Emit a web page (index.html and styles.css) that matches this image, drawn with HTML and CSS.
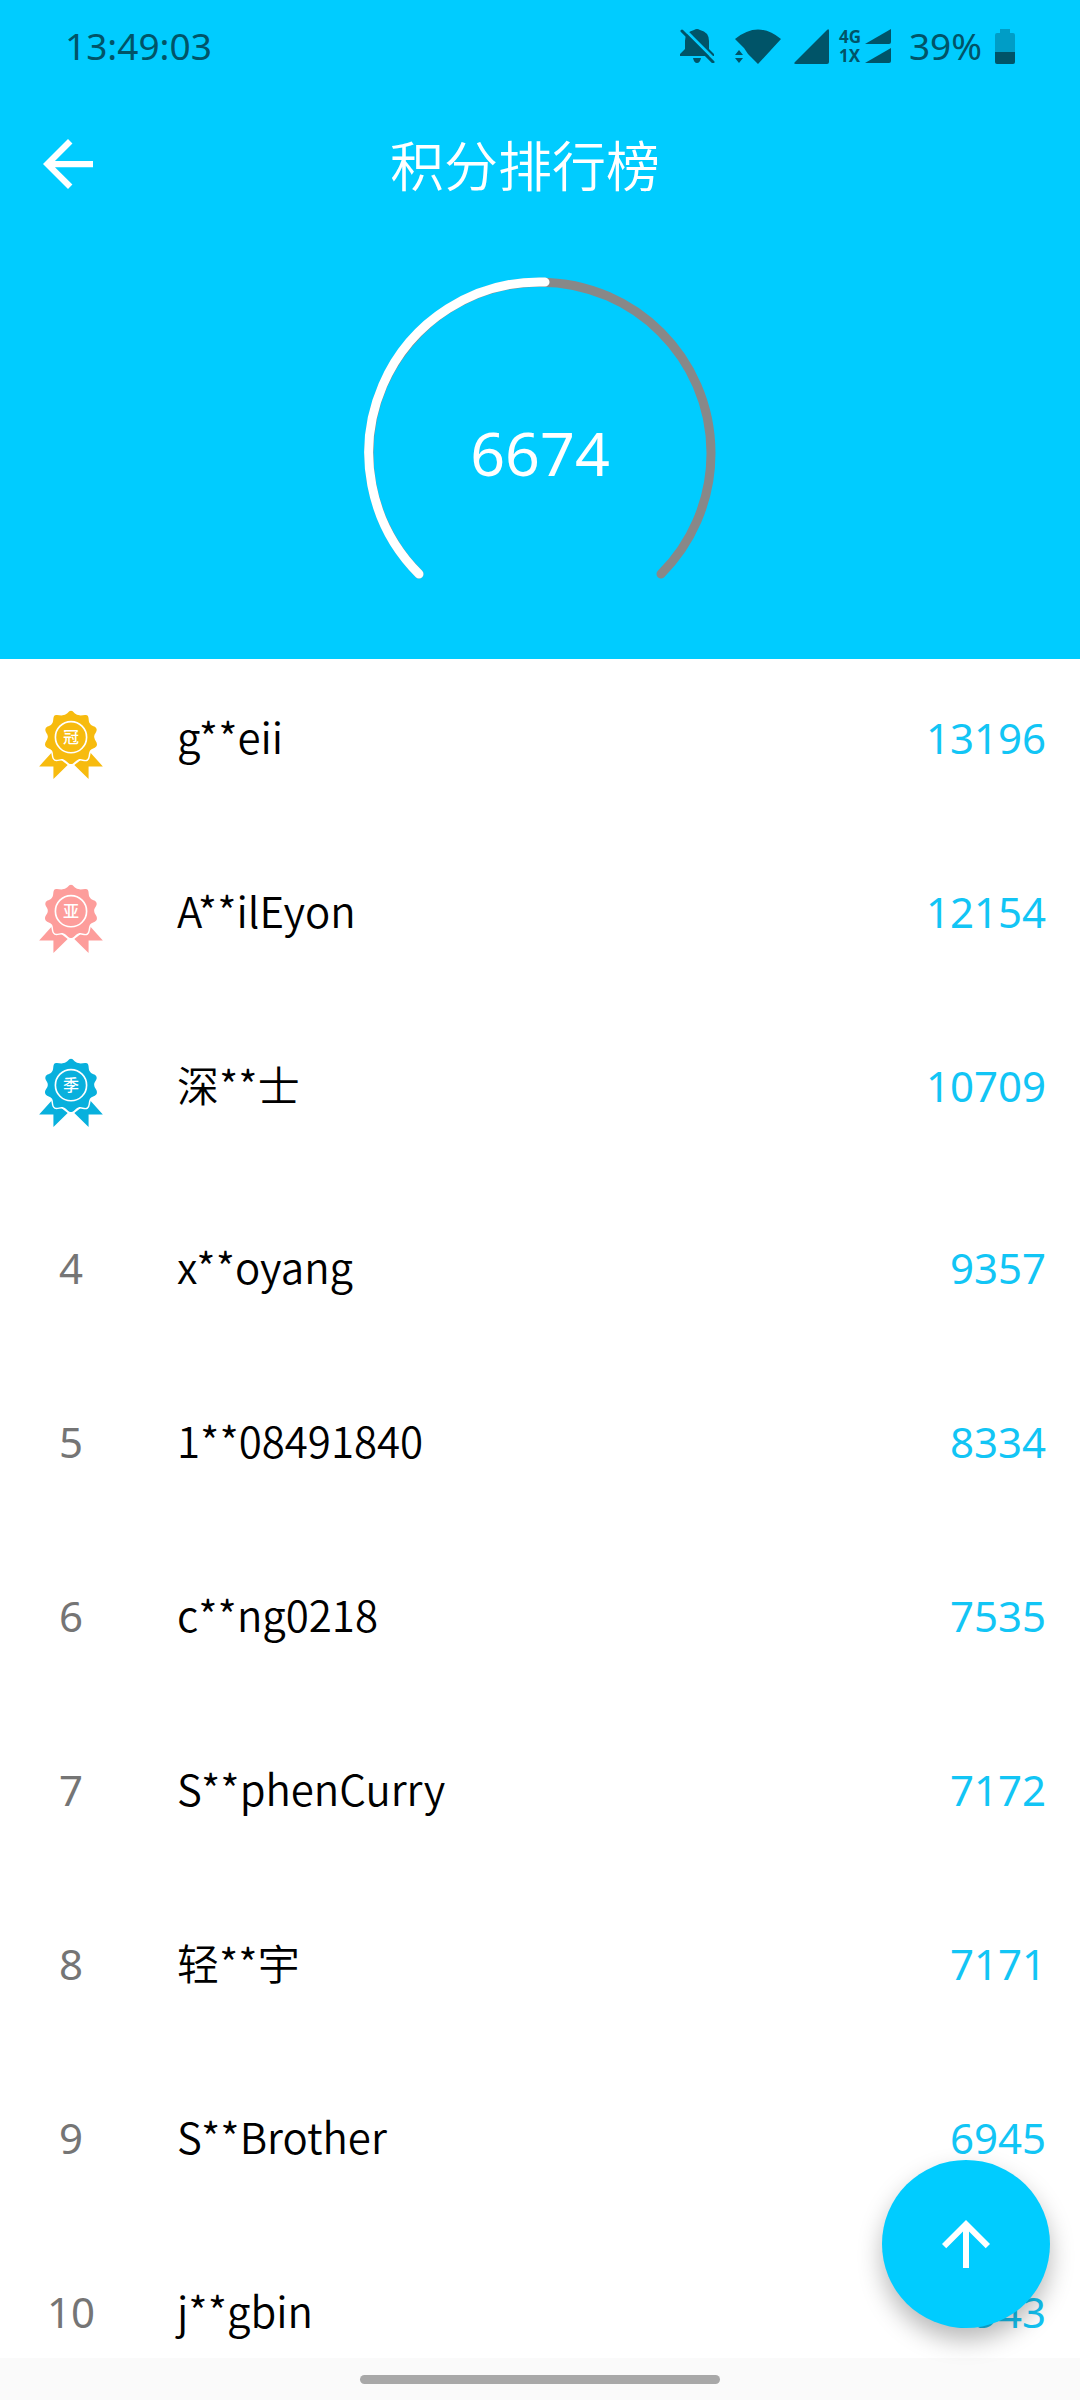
FILE: index.html
```html
<!DOCTYPE html>
<html lang="zh-CN">
<head>
<meta charset="utf-8">
<meta name="viewport" content="width=device-width, initial-scale=1">
<title>积分排行榜</title>
<link rel="stylesheet" href="styles.css">
</head>
<body>
<svg class="symbols" aria-hidden="true">
  <symbol id="medal" viewBox="0 0 192 208">
    <path fill="currentColor" d="M0 170 38 128 86 166 43 208V170ZM192 170 154 128 106 166 149 208V170Z"/>
    <path fill="currentColor" stroke="#fff" stroke-width="9" paint-order="stroke" stroke-linejoin="round" d="M74 15C86 13 88 2 96 2S106 13 118 15C128 19 136 12 144 16S147 32 153 41C158 50 170 48 173 57S164 72 166 82C167 92 176 96 174 106S158 114 153 123C148 132 151 144 144 149S128 144 118 149C108 153 105 163 96 163S84 153 74 149C64 144 56 153 48 149S44 132 39 123C34 114 20 116 18 106S25 92 26 82C28 72 16 66 19 57S34 50 39 41C45 32 40 20 48 16S64 19 74 15Z"/>
    <circle cx="96" cy="82" r="47" fill="none" stroke="#fff" stroke-width="5"/>
  </symbol>
</svg>

<header class="hero">
  <div class="status">
    <time class="clock">13:49:03</time>
    <div class="indicators">
      <svg class="bell" viewBox="0 0 36 34" aria-label="静音"><path fill="currentColor" d="M5 27H0v-2l5-5v-8q0-9 9-11 3-2 6 0 9 2 9 11v8l5 5v2ZM13 29h8q-1 5-4 5t-4-5Z"/><path stroke="#0cf" stroke-width="3" d="M4 0 36 32"/><path stroke="currentColor" stroke-width="3" stroke-linecap="round" d="M2 2 33 33"/></svg>
      <svg class="wifi" viewBox="0 0 48 35" aria-label="无线网络"><path fill="currentColor" d="M1 10Q24-9 47 10L24 35 14 25 10 19ZM1 26l4-5 4 5ZM1 29h8l-4 5Z"/></svg>
      <svg class="signal" viewBox="0 0 35 35" aria-label="信号"><path fill="currentColor" d="M33 1q2-2 2 1v31q0 2-2 2H2q-3 0-1-2Z"/></svg>
      <div class="networks">
        <span>4G</span><svg viewBox="0 0 26 15"><path fill="currentColor" d="M26 0v13q0 2-2 2H0Z"/></svg>
        <span>1X</span><svg viewBox="0 0 26 15"><path fill="currentColor" d="M26 0v13q0 2-2 2H0Z"/></svg>
      </div>
      <span class="percent">39%</span>
      <svg class="battery" viewBox="0 0 20 35" aria-label="电量"><path fill="#009dc6" d="M5 0h10v4h3q2 0 2 2v18H0V6q0-2 2-2h3Z"/><path fill="currentColor" d="M0 23h20v10q0 2-2 2H2q-2 0-2-2Z"/></svg>
    </div>
  </div>
  <div class="appbar">
    <button class="back" type="button" aria-label="返回"><svg viewBox="4 4 16 16"><path fill="currentColor" d="M20 11H7.83l5.59-5.59L12 4l-8 8 8 8 1.41-1.41L7.83 13H20z"/></svg></button>
    <h1>积分排行榜</h1>
  </div>
  <div class="gauge">
    <svg viewBox="0 0 352 302" fill="none" stroke-width="9" stroke-linecap="round" aria-hidden="true">
      <path stroke="#888" d="M55 297A171 171 0 1 1 297 297"/>
      <path stroke="#fff" d="M55 297A171 171 0 0 1 181 5"/>
    </svg>
    <span class="total">6674</span>
  </div>
</header>

<main class="board">
  <ol class="list">
    <li class="row podium"><svg class="medal gold"><use href="#medal"/><text x="32" y="33">冠</text></svg><span class="name">g**eii</span><span class="score">13196</span></li>
    <li class="row podium"><svg class="medal pink"><use href="#medal"/><text x="32" y="33">亚</text></svg><span class="name">A**ilEyon</span><span class="score">12154</span></li>
    <li class="row podium"><svg class="medal blue"><use href="#medal"/><text x="32" y="33">季</text></svg><span class="name">深**士</span><span class="score">10709</span></li>
    <li class="row"><span class="rank">4</span><span class="name">x**oyang</span><span class="score">9357</span></li>
    <li class="row"><span class="rank">5</span><span class="name">1**08491840</span><span class="score">8334</span></li>
    <li class="row"><span class="rank">6</span><span class="name">c**ng0218</span><span class="score">7535</span></li>
    <li class="row"><span class="rank">7</span><span class="name">S**phenCurry</span><span class="score">7172</span></li>
    <li class="row"><span class="rank">8</span><span class="name">轻**宇</span><span class="score">7171</span></li>
    <li class="row"><span class="rank">9</span><span class="name">S**Brother</span><span class="score">6945</span></li>
    <li class="row"><span class="rank">10</span><span class="name">j**gbin</span><span class="score">6943</span></li>
  </ol>
  <button class="to-top" type="button" aria-label="回到顶部"><svg viewBox="4 4 16 16"><path fill="currentColor" d="M4 12l1.41 1.41L11 7.83V20h2V7.83l5.58 5.59L20 12l-8-8-8 8z"/></svg></button>
</main>

<footer class="navbar"><div class="handle"></div></footer>
</body>
</html>
```
FILE: styles.css
```css
* { box-sizing: border-box; }

body {
  margin: 0;
  height: 100vh;
  display: flex;
  flex-direction: column;
  background: #fff;
  color: #000;
  font-family: "Noto Sans", "Noto Sans CJK SC", sans-serif;
  font-weight: 400;
}

svg { display: block; }
button { border: 0; padding: 0; background: none; color: #fff; cursor: pointer; }
.symbols { position: absolute; width: 0; height: 0; }

/* Header */
.hero { flex: none; background: #0cf; color: #fff; padding-bottom: 80px; }

.status {
  display: flex;
  justify-content: space-between;
  align-items: center;
  height: 92px;
  padding: 0 65px;
  color: #005468;
  font-size: 37px;
  line-height: 48px;
}
.indicators { display: flex; align-items: center; }
.bell { width: 36px; height: 34px; }
.wifi { width: 48px; height: 35px; margin-left: 18px; }
.signal { width: 35px; height: 35px; margin-left: 12px; }
.networks {
  display: grid;
  grid-template-columns: 26px 26px;
  row-gap: 4px;
  margin-left: 10px;
  font: 700 17px/15px "Noto Sans", sans-serif;
}
.networks svg { width: 26px; height: 15px; }
.percent { margin-left: 18px; }
.battery { width: 20px; height: 35px; margin-left: 13px; }

.appbar {
  display: flex;
  align-items: center;
  height: 144px;
  padding: 0 30px 0 43px;
}
.back svg { width: 50px; height: 50px; }
h1 {
  flex: 1;
  margin: 0 93px 0 0;
  font-family: "Noto Sans CJK SC", sans-serif;
  font-size: 54px;
  line-height: 80px;
  font-weight: 350;
  text-align: center;
}

.gauge {
  display: grid;
  place-items: center;
  width: 352px;
  margin: 41px auto 0;
}
.gauge svg, .total { grid-area: 1 / 1; }
.gauge svg { width: 352px; height: 302px; }
.total { font-size: 61px; line-height: 80px; padding-top: 50px; }

/* Leaderboard */
.board { position: relative; flex: 1; min-height: 0; }
.list {
  height: 100%;
  margin: 0;
  padding: 0;
  list-style: none;
  overflow-y: auto;
  scrollbar-width: none;
}
.row {
  display: grid;
  grid-template-columns: 142px 1fr auto;
  align-items: center;
  height: 174px;
  padding-right: 34px;
  font-size: 42px;
  line-height: 60px;
}
.podium { padding-bottom: 16px; }
.name {
  padding: 0 0 4px 35px;
  font-family: "Noto Sans CJK SC", sans-serif;
  font-weight: 350;
}
.rank { justify-self: center; color: #757575; }
.score { color: #12c5f5; }
.medal { justify-self: center; width: 64px; height: 69px; margin-top: 12px; }
.medal text {
  fill: #fff;
  font: 500 16px "Noto Sans CJK SC", sans-serif;
  text-anchor: middle;
}
.gold { color: #f7bb0e; }
.pink { color: #fd9d9b; }
.blue { color: #08b0dd; }

.to-top {
  position: absolute;
  right: 30px;
  bottom: 30px;
  display: grid;
  place-items: center;
  width: 168px;
  height: 168px;
  border-radius: 50%;
  background: #0cf;
  box-shadow: 0 12px 24px rgba(0, 0, 0, .28);
}
.to-top svg { width: 48px; height: 48px; }

.navbar {
  flex: none;
  display: flex;
  justify-content: center;
  padding: 17px 0 16px;
  background: #fafafa;
}
.handle { width: 33.333%; height: 9px; border-radius: 5px; background: #a8a8a8; }
```
